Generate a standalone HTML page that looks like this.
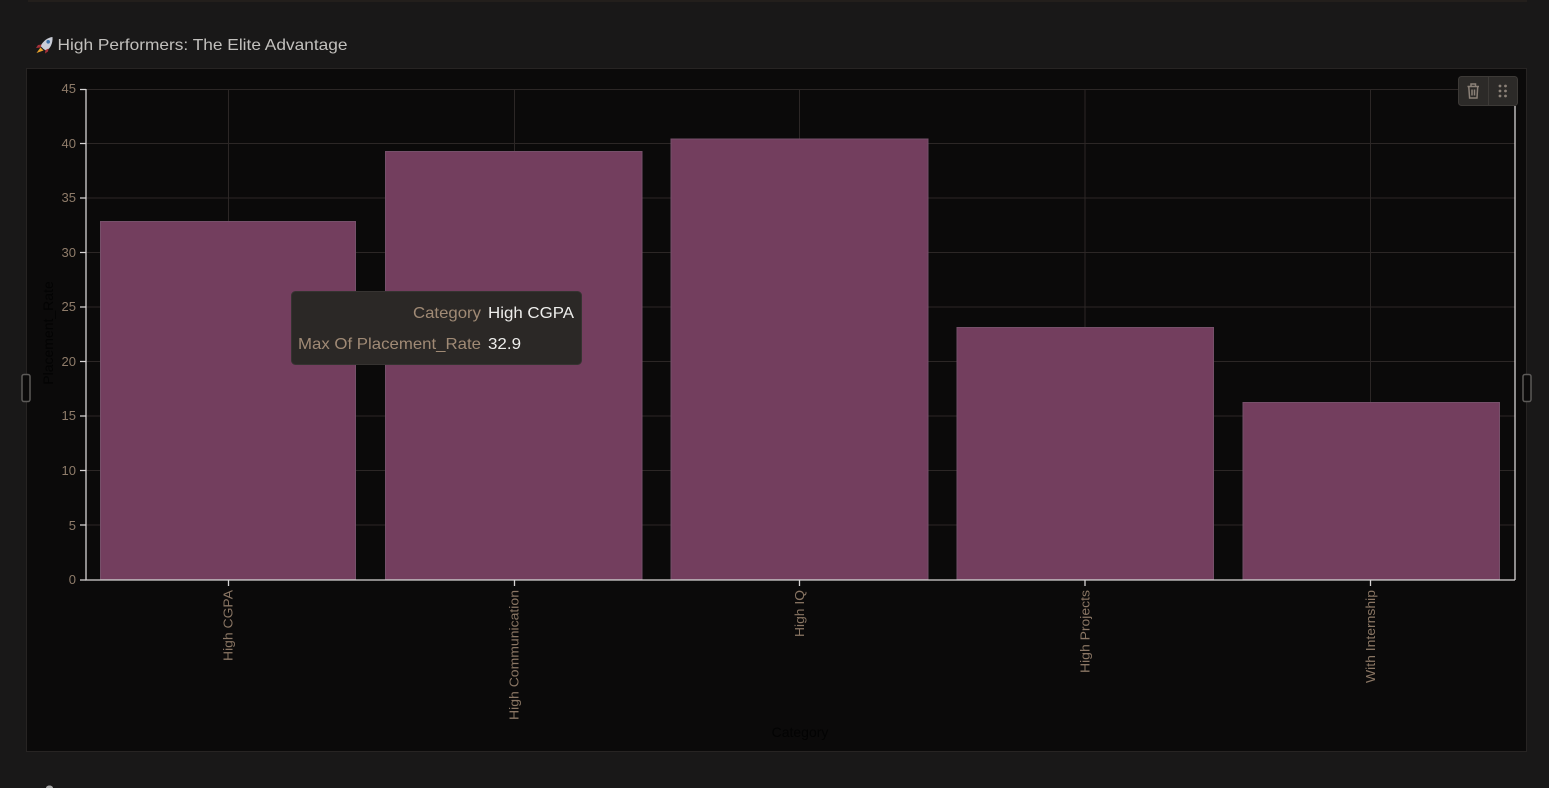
<!DOCTYPE html>
<html>
<head>
<meta charset="utf-8">
<style>
html,body{margin:0;padding:0;width:1549px;height:788px;overflow:hidden;background:#191818}
svg{display:block;font-family:"Liberation Sans",sans-serif;filter:blur(.35px)}
</style>
</head>
<body>
<svg width="1549" height="788" viewBox="0 0 1549 788" xmlns="http://www.w3.org/2000/svg">
<rect width="1549" height="788" fill="#191818"/>
<rect x="28" y="0" width="1499" height="2" fill="#231f1c"/>

<!-- title -->
<g>
<path d="M52.500 37C48 37.500 43.500 40.500 40.500 46L43.500 49 46.500 51C50.500 48 53 43 52.500 37Z" fill="#c9ccd6"/>
<circle cx="48.200" cy="41.800" r="1.800" fill="#3a6fa8"/>
<path d="M41.500 44.500L38 45 36 48 40.500 47.500Z" fill="#a5303a"/>
<path d="M48.500 48.500L48 51.500 45 53.500 45.500 50Z" fill="#a5303a"/>
<path d="M40.500 47.500L43.500 50.500 36.500 53Z" fill="#e9a32c"/>
</g>
<text x="57.500" y="50" font-size="16" fill="#c2c0bd" textLength="290" lengthAdjust="spacingAndGlyphs">High Performers: The Elite Advantage</text>

<!-- panel -->
<rect x="26.500" y="68.500" width="1500" height="683" fill="#0b0a0a" stroke="#272423"/>

<!-- grid -->
<g stroke="#2c2726" stroke-width="1">
<path d="M86 89.500H1515M86 143.500H1515M86 198H1515M86 252.500H1515M86 307H1515M86 361.500H1515M86 416H1515M86 470.500H1515M86 525H1515"/>
<path d="M228.500 89V580M514.500 89V580M799.500 89V580M1085 89V580M1370.500 89V580"/>
</g>

<!-- bars -->
<g fill="#733e5e" stroke="#76506a" stroke-width="1">
<rect x="100.500" y="221.500" width="255" height="358"/>
<rect x="385.500" y="151.500" width="256.500" height="428"/>
<rect x="671" y="139" width="257" height="440.500"/>
<rect x="957" y="327.500" width="256.500" height="252"/>
<rect x="1243" y="402.500" width="256.500" height="177"/>
</g>

<!-- axes -->
<g stroke="#d6d3d3" stroke-width="1.300" fill="none">
<path d="M86 89V580H1515M1515 106V580"/>
<path d="M80 89.500H86M80 143.500H86M80 198H86M80 252.500H86M80 307H86M80 361.500H86M80 416H86M80 470.500H86M80 525H86M80 580H86"/>
<path d="M228.500 580V586M514.500 580V586M799.500 580V586M1085 580V586M1370.500 580V586"/>
</g>

<!-- y labels -->
<g font-size="13" fill="#8f7c6a" text-anchor="end">
<text x="76" y="93">45</text>
<text x="76" y="148">40</text>
<text x="76" y="202">35</text>
<text x="76" y="257">30</text>
<text x="76" y="311">25</text>
<text x="76" y="366">20</text>
<text x="76" y="420">15</text>
<text x="76" y="475">10</text>
<text x="76" y="530">5</text>
<text x="76" y="584">0</text>
</g>

<!-- x labels -->
<g font-size="13" fill="#8a7664">
<text transform="translate(232.500,661) rotate(-90)" textLength="71" lengthAdjust="spacingAndGlyphs">High CGPA</text>
<text transform="translate(518.500,720) rotate(-90)" textLength="130" lengthAdjust="spacingAndGlyphs">High Communication</text>
<text transform="translate(804,637) rotate(-90)" textLength="47" lengthAdjust="spacingAndGlyphs">High IQ</text>
<text transform="translate(1089.500,673) rotate(-90)" textLength="83" lengthAdjust="spacingAndGlyphs">High Projects</text>
<text transform="translate(1375,683) rotate(-90)" textLength="93" lengthAdjust="spacingAndGlyphs">With Internship</text>
</g>

<!-- dark axis titles -->
<text x="800" y="737" font-size="14" fill="#030303" text-anchor="middle">Category</text>
<text transform="translate(53,333) rotate(-90)" font-size="14" fill="#030303" text-anchor="middle">Placement_Rate</text>

<!-- tooltip -->
<rect x="291.500" y="291.500" width="290" height="73" rx="4" fill="#2b2826" stroke="#363331"/>
<g font-size="16">
<text x="413" y="318" fill="#a08a75" textLength="68" lengthAdjust="spacingAndGlyphs">Category</text>
<text x="298" y="349" fill="#a08a75" textLength="183" lengthAdjust="spacingAndGlyphs">Max Of Placement_Rate</text>
<text x="488" y="318" fill="#eeeeec" textLength="86" lengthAdjust="spacingAndGlyphs">High CGPA</text>
<text x="488" y="349" fill="#eeeeec" textLength="33" lengthAdjust="spacingAndGlyphs">32.9</text>
</g>

<!-- toolbar -->
<rect x="1458.500" y="76.500" width="59" height="29" rx="3" fill="#2c2a28" stroke="#3d3a37"/>
<path d="M1488.500 77V105" stroke="#3d3a37"/>
<g fill="none" stroke="#8b8178" stroke-width="1.500">
<path d="M1467.500 86.500H1479"/>
<path d="M1471 86V84H1475.500V86"/>
<path d="M1468.800 87L1469.600 98H1477L1477.700 87"/>
<path d="M1472 89.500V95.500M1474.500 89.500V95.500"/>
</g>
<g fill="#8b8178">
<circle cx="1500" cy="86" r="1.400"/><circle cx="1505.500" cy="86" r="1.400"/>
<circle cx="1500" cy="91" r="1.400"/><circle cx="1505.500" cy="91" r="1.400"/>
<circle cx="1500" cy="96" r="1.400"/><circle cx="1505.500" cy="96" r="1.400"/>
</g>

<!-- resize handles -->
<rect x="22" y="374.500" width="8" height="27" rx="2" fill="#0b0a0a" stroke="#5c5a58" stroke-width="1.500"/>
<rect x="1523" y="374.500" width="8" height="27" rx="2" fill="#0b0a0a" stroke="#5c5a58" stroke-width="1.500"/>

<!-- top of next section -->
<ellipse cx="49.500" cy="788" rx="3.500" ry="2.500" fill="#a8a8a8"/>
</svg>
</body>
</html>
